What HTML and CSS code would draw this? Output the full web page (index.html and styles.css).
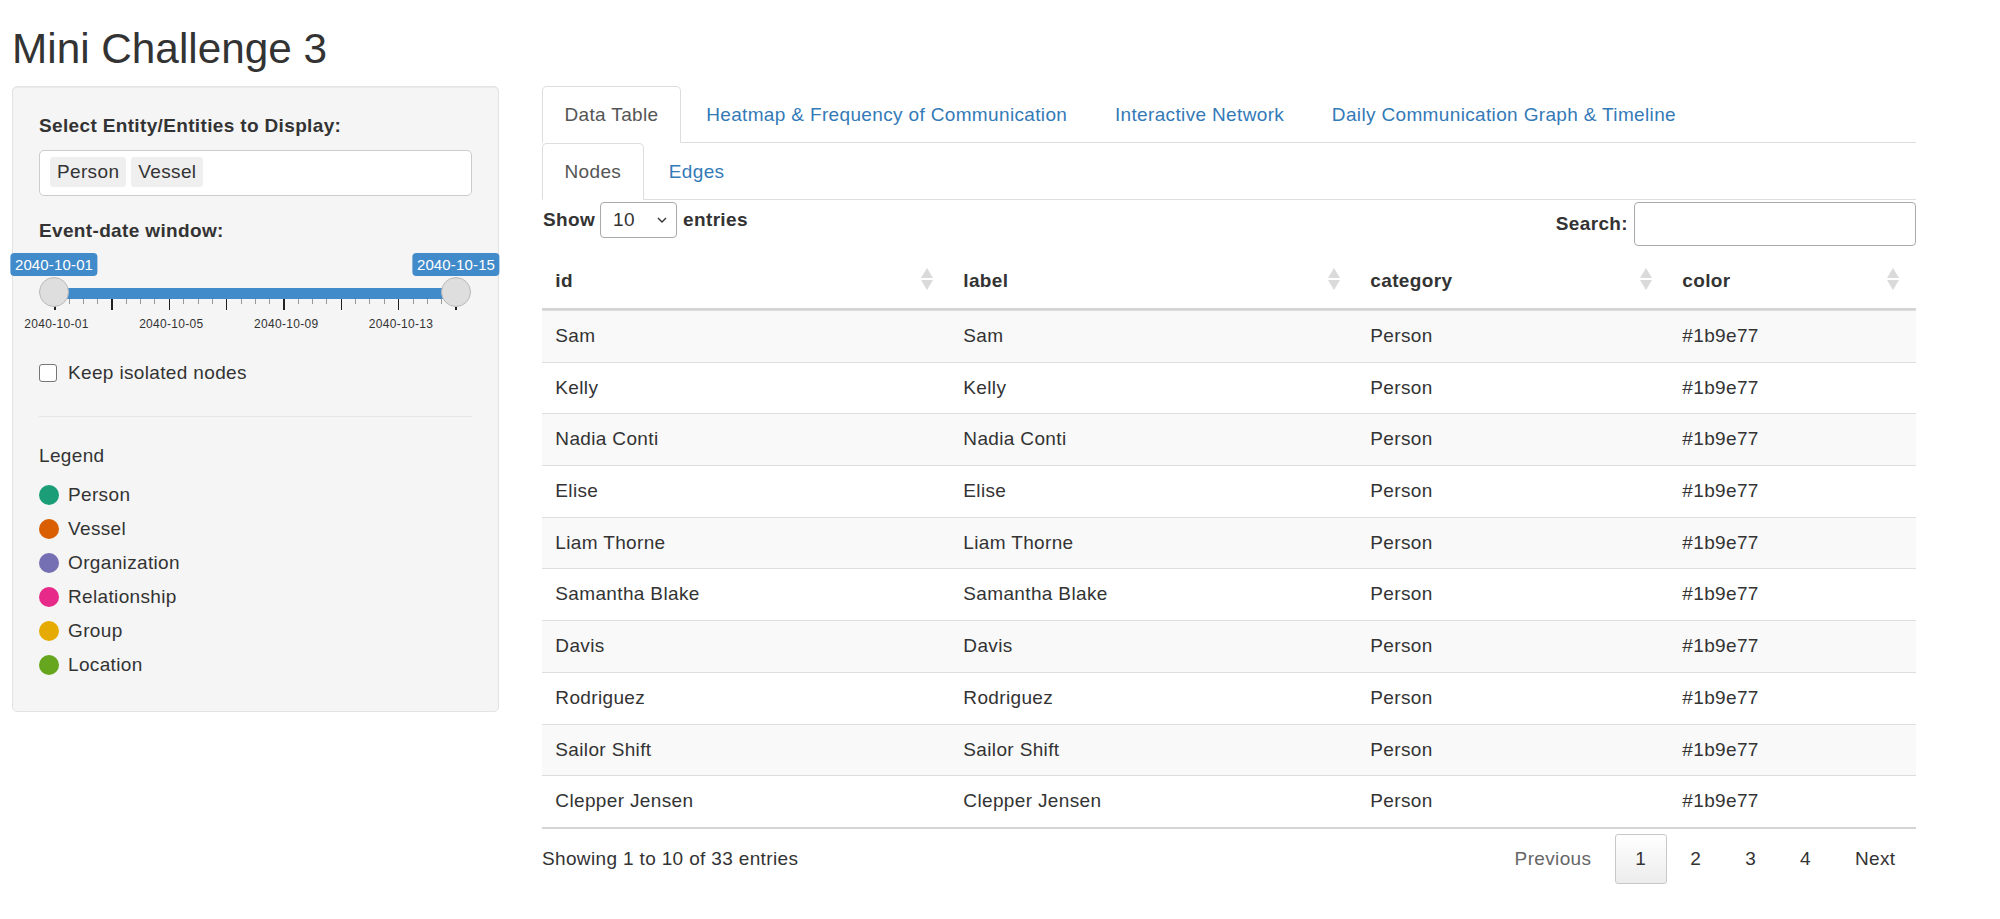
FILE: index.html
```html
<!DOCTYPE html>
<html lang="en">
<head>
<meta charset="utf-8">
<title>Mini Challenge 3</title>
<link rel="stylesheet" href="styles.css">
</head>
<body>
<div class="page">
  <h1 class="title">Mini Challenge 3</h1>
  <div class="layout">
    <aside class="well">
      <div class="ctl-label">Select Entity/Entities to Display:</div>
      <div class="selectize">
        <span class="chip">Person</span>
        <span class="chip">Vessel</span>
      </div>

      <div class="ctl-label date-label">Event-date window:</div>
      <div class="slider">
        <span class="tip tip-from">2040-10-01</span>
        <span class="tip tip-to">2040-10-15</span>
        <div class="bar"></div>
        <div class="grid">
          <i class="pol big"></i><i class="pol"></i><i class="pol"></i><i class="pol"></i>
          <i class="pol big"></i><i class="pol"></i><i class="pol"></i><i class="pol"></i>
          <i class="pol big"></i><i class="pol"></i><i class="pol"></i><i class="pol"></i>
          <i class="pol big"></i><i class="pol"></i><i class="pol"></i><i class="pol"></i>
          <i class="pol big"></i><i class="pol"></i><i class="pol"></i><i class="pol"></i>
          <i class="pol big"></i><i class="pol"></i><i class="pol"></i><i class="pol"></i>
          <i class="pol big"></i><i class="pol"></i><i class="pol"></i><i class="pol"></i>
          <i class="pol big"></i>
        </div>
        <div class="grid-labels">
          <span class="gl gl-1">2040-10-01</span>
          <span class="gl gl-2">2040-10-05</span>
          <span class="gl gl-3">2040-10-09</span>
          <span class="gl gl-4">2040-10-13</span>
        </div>
        <span class="handle h-from"></span>
        <span class="handle h-to"></span>
      </div>

      <label class="check-row">
        <span class="checkbox"></span>
        <span>Keep isolated nodes</span>
      </label>

      <hr class="sep">

      <div class="legend-title">Legend</div>
      <ul class="legend">
        <li><span class="dot dot-person"></span>Person</li>
        <li><span class="dot dot-vessel"></span>Vessel</li>
        <li><span class="dot dot-org"></span>Organization</li>
        <li><span class="dot dot-rel"></span>Relationship</li>
        <li><span class="dot dot-group"></span>Group</li>
        <li><span class="dot dot-loc"></span>Location</li>
      </ul>
    </aside>

    <main class="main">
      <ul class="nav-tabs">
        <li class="active"><a>Data Table</a></li>
        <li><a>Heatmap &amp; Frequency of Communication</a></li>
        <li><a>Interactive Network</a></li>
        <li><a>Daily Communication Graph &amp; Timeline</a></li>
      </ul>
      <div class="tab-content">
        <ul class="nav-tabs sub-tabs">
          <li class="active"><a>Nodes</a></li>
          <li><a>Edges</a></li>
        </ul>

        <div class="dt">
          <div class="dt-top">
            <div class="dt-length">
              <span class="bold">Show</span>
              <span class="select">10
                <svg class="chev" width="10" height="6" viewBox="0 0 10 6"><path d="M1 1 L5 5 L9 1" fill="none" stroke="#333" stroke-width="1.4"/></svg>
              </span>
              <span class="bold">entries</span>
            </div>
            <div class="dt-search">
              <span class="bold">Search:</span>
              <input class="search-input" type="text">
            </div>
          </div>

          <table class="table">
            <colgroup>
              <col class="c1"><col class="c2"><col class="c3"><col class="c4">
            </colgroup>
            <thead>
              <tr>
                <th>id<span class="sort"><i class="up"></i><i class="down"></i></span></th>
                <th>label<span class="sort"><i class="up"></i><i class="down"></i></span></th>
                <th>category<span class="sort"><i class="up"></i><i class="down"></i></span></th>
                <th>color<span class="sort"><i class="up"></i><i class="down"></i></span></th>
              </tr>
            </thead>
            <tbody>
              <tr><td>Sam</td><td>Sam</td><td>Person</td><td>#1b9e77</td></tr>
              <tr><td>Kelly</td><td>Kelly</td><td>Person</td><td>#1b9e77</td></tr>
              <tr><td>Nadia Conti</td><td>Nadia Conti</td><td>Person</td><td>#1b9e77</td></tr>
              <tr><td>Elise</td><td>Elise</td><td>Person</td><td>#1b9e77</td></tr>
              <tr><td>Liam Thorne</td><td>Liam Thorne</td><td>Person</td><td>#1b9e77</td></tr>
              <tr><td>Samantha Blake</td><td>Samantha Blake</td><td>Person</td><td>#1b9e77</td></tr>
              <tr><td>Davis</td><td>Davis</td><td>Person</td><td>#1b9e77</td></tr>
              <tr><td>Rodriguez</td><td>Rodriguez</td><td>Person</td><td>#1b9e77</td></tr>
              <tr><td>Sailor Shift</td><td>Sailor Shift</td><td>Person</td><td>#1b9e77</td></tr>
              <tr><td>Clepper Jensen</td><td>Clepper Jensen</td><td>Person</td><td>#1b9e77</td></tr>
            </tbody>
          </table>

          <div class="dt-bottom">
            <div class="dt-info">Showing 1 to 10 of 33 entries</div>
            <div class="pager">
              <span class="pbtn disabled">Previous</span>
              <span class="pbtn current">1</span>
              <span class="pbtn">2</span>
              <span class="pbtn">3</span>
              <span class="pbtn">4</span>
              <span class="pbtn">Next</span>
            </div>
          </div>
        </div>
      </div>
    </main>
  </div>
</div>
</body>
</html>
```

FILE: styles.css
```css
* { box-sizing: border-box; }

html, body {
  margin: 0;
  padding: 0;
  background: #fff;
}

body {
  font-family: "Liberation Sans", Arial, Helvetica, sans-serif;
  font-size: 19px;
  letter-spacing: 0.35px;
  line-height: 26.67px;
  color: #333;
}

.page {
  padding: 0 12px;
}

.title {
  font-size: 42.3px;
  font-weight: 400;
  letter-spacing: 0;
  line-height: 47.3px;
  margin: 24.5px 0 14.2px 0;
  color: #333;
}

.layout {
  display: grid;
  grid-template-columns: 487px 1374px;
  column-gap: 43px;
  align-items: start;
}

/* ---------- sidebar ---------- */
.well {
  background: #f5f5f5;
  border: 1px solid #e3e3e3;
  border-radius: 5px;
  box-shadow: inset 0 1px 1px rgba(0,0,0,0.05);
  padding: 26px 26px 29px 26px;
}

.ctl-label {
  font-weight: 700;
  margin-bottom: 10.33px;
}

.date-label {
  margin-top: 22px;
  margin-bottom: 0;
}

.selectize {
  height: 46px;
  background: #fff;
  border: 1px solid #cccccc;
  border-radius: 5px;
  padding: 6px 10px;
  display: flex;
  gap: 5px;
}

.chip {
  height: 30px;
  line-height: 30px;
  padding: 0 7px;
  background: #efefef;
  border-radius: 3px;
  color: #333;
}

.slider {
  position: relative;
  height: 90px;
  margin-top: 3.33px;
}

.tip {
  position: absolute;
  top: 5px;
  height: 23px;
  line-height: 23px;
  padding: 0 4.5px;
  background: #428bca;
  color: #fff;
  font-size: 15px;
  letter-spacing: 0.15px;
  border-radius: 4px;
  transform: translateX(-50%);
  white-space: nowrap;
}
.tip-from { left: 15px; }
.tip-to { left: 417px; }

.bar {
  position: absolute;
  left: 15px;
  width: 402px;
  top: 40px;
  height: 11px;
  background: #428bca;
}

.handle {
  position: absolute;
  top: 29px;
  width: 30px;
  height: 30px;
  border-radius: 50%;
  background: #dedede;
  border: 1px solid #b9b9b9;
  z-index: 2;
}
.h-from { left: 0; }
.h-to { left: 402px; }

.grid {
  position: absolute;
  left: 15px;
  width: 403px;
  top: 51px;
  display: flex;
  justify-content: space-between;
  align-items: flex-start;
}

.pol {
  display: block;
  width: 1px;
  height: 5px;
  background: #999;
}
.pol.big {
  width: 1.5px;
  height: 11px;
  background: #222;
}

.grid-labels {
  position: absolute;
  left: 17.5px;
  width: 402px;
  top: 68px;
  height: 16px;
}

.gl {
  position: absolute;
  top: 0;
  font-size: 12px;
  letter-spacing: 0.3px;
  line-height: 16px;
  color: #333;
  transform: translateX(-50%);
  white-space: nowrap;
}
.gl-1 { left: 0; }
.gl-2 { left: 28.571%; }
.gl-3 { left: 57.143%; }
.gl-4 { left: 85.714%; }

.check-row {
  display: flex;
  align-items: center;
  gap: 11px;
  margin-top: 22px;
  height: 26.67px;
}

.checkbox {
  width: 18px;
  height: 18px;
  background: #fff;
  border: 1px solid #767676;
  border-radius: 3px;
  flex: none;
}

.sep {
  border: 0;
  border-top: 1px solid #e6e6e6;
  margin: 29.33px 0 26.2px 0;
  height: 0;
}

.legend-title {
  height: 26.67px;
}

.legend {
  list-style: none;
  margin: 8.13px 0 0 0;
  padding: 0;
}

.legend li {
  display: flex;
  align-items: center;
  gap: 9px;
  height: 34px;
}

.dot {
  width: 20px;
  height: 20px;
  border-radius: 50%;
  flex: none;
}
.dot-person { background: #1b9e77; }
.dot-vessel { background: #d95f02; }
.dot-org { background: #7570b3; }
.dot-rel { background: #e7298a; }
.dot-group { background: #e6ab02; }
.dot-loc { background: #66a61e; }

/* ---------- main ---------- */
.nav-tabs {
  list-style: none;
  margin: 0;
  padding: 0;
  display: flex;
  border-bottom: 1px solid #ddd;
}

.nav-tabs li {
  margin-bottom: -1px;
  margin-right: 2.67px;
}

.nav-tabs a {
  display: block;
  padding: 15px 21.5px 13px 21.5px;
  border: 1px solid transparent;
  border-radius: 5px 5px 0 0;
  color: #337ab7;
  line-height: 26.67px;
}

.nav-tabs li.active a {
  color: #555;
  background: #fff;
  border-color: #ddd #ddd transparent #ddd;
}

.sub-tabs {
  margin-top: 0.5px;
}

.dt {
  margin-top: 2.3px;
}

.dt-top {
  display: flex;
  justify-content: space-between;
  align-items: flex-start;
  height: 44px;
  margin-bottom: 8px;
}

.bold { font-weight: 700; }

.dt-length {
  display: flex;
  align-items: center;
  height: 36px;
  padding-left: 1px;
}

.select {
  display: flex;
  align-items: center;
  justify-content: space-between;
  width: 77px;
  height: 36px;
  margin: 0 6px 0 5px;
  padding: 0 9px 0 12px;
  border: 1px solid #aaa;
  border-radius: 4px;
  background: #fff;
}

.chev { display: block; }

.dt-search {
  display: flex;
  align-items: center;
  height: 44px;
  gap: 6px;
}

.search-input {
  width: 282px;
  height: 44px;
  border: 1px solid #aaa;
  border-radius: 4px;
  background: #fff;
  padding: 0 8px;
  font: inherit;
}

.table {
  width: 100%;
  table-layout: fixed;
  border-collapse: separate;
  border-spacing: 0;
}

.c1 { width: 408px; }
.c2 { width: 407px; }
.c3 { width: 312px; }
.c4 { width: 247px; }

.table th {
  position: relative;
  text-align: left;
  font-weight: 700;
  padding: 14px 30px 13.33px 13.33px;
  line-height: 26.67px;
  border-bottom: 2px solid #d4d4d4;
}

.sort {
  position: absolute;
  right: 17px;
  top: 50%;
  width: 12px;
  height: 22px;
  margin-top: -13px;
}

.sort i {
  position: absolute;
  left: 0;
  width: 0;
  height: 0;
  border-left: 6px solid transparent;
  border-right: 6px solid transparent;
}
.sort .up {
  top: 0;
  border-bottom: 10px solid #dadada;
}
.sort .down {
  bottom: 0;
  border-top: 10px solid #dadada;
}

.table td {
  padding: 12px 13.33px;
  line-height: 26.67px;
  border-top: 1px solid #ddd;
  white-space: nowrap;
}

.table tbody tr:nth-child(odd) td {
  background: #f9f9f9;
}

.table tbody tr:last-child td {
  border-bottom: 2px solid #d4d4d4;
}

.dt-bottom {
  display: flex;
  justify-content: space-between;
  align-items: center;
  margin-top: 5px;
  height: 50px;
}

.pager {
  display: flex;
  align-items: center;
  gap: 3px;
}

.pbtn {
  display: block;
  height: 50px;
  line-height: 48px;
  padding: 0 19.5px;
  border: 1px solid transparent;
  border-radius: 3px;
  color: #333;
}

.pbtn.disabled {
  color: #666;
}

.pbtn.current {
  border-color: #c8c8c8;
  background: linear-gradient(to bottom, #ffffff 0%, #ececec 100%);
}
```
